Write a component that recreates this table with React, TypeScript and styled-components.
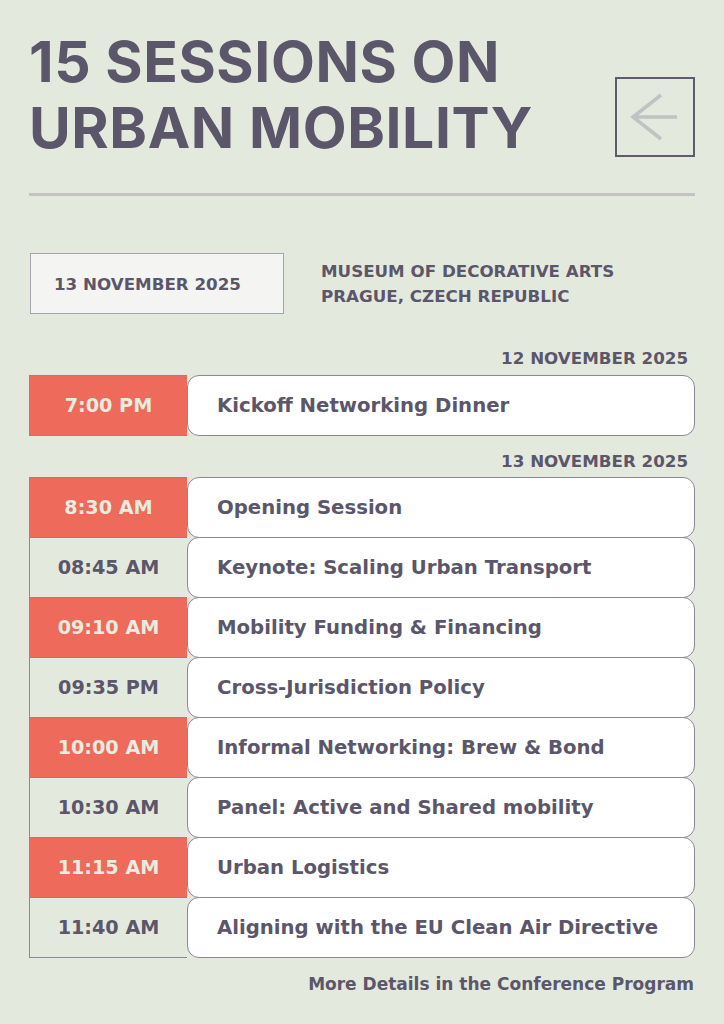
import React from "react";
import styled, { createGlobalStyle } from "styled-components";

const GlobalStyle = createGlobalStyle`
  html, body {
    margin: 0;
    padding: 0;
    background: #e4e9de;
  }
  body {
    font-family: "DejaVu Sans", Verdana, sans-serif;
    color: #5b566a;
  }
`;

const Page = styled.div`
  width: 724px;
  min-height: 1024px;
  box-sizing: border-box;
  padding: 29px 29px 0 29px;
  background: #e4e9de;
`;

const Header = styled.header`
  display: flex;
  justify-content: space-between;
  align-items: flex-start;
`;

const Title = styled.h1`
  margin: 0;
  font-family: Inter, Arial, sans-serif;
  font-weight: 700;
  font-size: 57px;
  line-height: 66px;
  letter-spacing: 0.6px;
  color: #5b566a;
  text-transform: uppercase;
`;

const ArrowBox = styled.div`
  width: 80px;
  height: 80px;
  box-sizing: border-box;
  border: 2px solid #5f5a6e;
  margin-top: 48px;
  display: flex;
  align-items: center;
  justify-content: center;
`;

const Divider = styled.hr`
  margin: 32px 0 0 0;
  border: none;
  height: 3px;
  background: #c3c4c1;
`;

const InfoRow = styled.section`
  display: flex;
  align-items: center;
  gap: 37px;
  margin-top: 57px;
  padding-left: 1px;
`;

const DateBox = styled.div`
  width: 254px;
  height: 61px;
  box-sizing: border-box;
  border: 1px solid #a7a4ad;
  background: #f4f4f2;
  display: flex;
  align-items: center;
  padding-left: 23px;
  font-size: 16.7px;
  font-weight: 700;
`;

const Venue = styled.div`
  font-size: 16.7px;
  font-weight: 700;
  line-height: 25px;
  text-transform: uppercase;
`;

const Schedule = styled.section`
  display: flex;
  flex-direction: column;
`;

const DayLabel = styled.div<{ $first?: boolean }>`
  text-align: right;
  padding-right: 7px;
  font-size: 16.7px;
  font-weight: 700;
  line-height: 20px;
  margin-top: ${(p) => (p.$first ? "34px" : "15px")};
  margin-bottom: ${(p) => (p.$first ? "7px" : "6px")};
`;

const Row = styled.div`
  display: grid;
  grid-template-columns: 158px 1fr;
  height: 61px;
  & + & {
    margin-top: -1px;
  }
`;

const TimeCell = styled.div<{ $accent: boolean }>`
  box-sizing: border-box;
  border: 1px solid #8c8794;
  border-right: none;
  background: ${(p) => (p.$accent ? "#ee6a5a" : "#e4e9de")};
  color: ${(p) => (p.$accent ? "#e9ecdf" : "#5b566a")};
  display: flex;
  align-items: center;
  justify-content: center;
  font-size: 19.2px;
  font-weight: 700;
`;

const SessionCell = styled.div`
  box-sizing: border-box;
  border: 1px solid #8c8794;
  border-radius: 12px;
  background: #ffffff;
  display: flex;
  align-items: center;
  padding-left: 29px;
  font-size: 19.7px;
  font-weight: 700;
  color: #5b566a;
`;

const Footer = styled.div`
  text-align: right;
  padding-right: 1px;
  margin-top: 16px;
  font-size: 17px;
  font-weight: 700;
  line-height: 20px;
`;

type Session = { time: string; title: string; accent: boolean };

const day1: Session[] = [
  { time: "7:00 PM", title: "Kickoff Networking Dinner", accent: true },
];

const day2: Session[] = [
  { time: "8:30 AM", title: "Opening Session", accent: true },
  { time: "08:45 AM", title: "Keynote: Scaling Urban Transport", accent: false },
  { time: "09:10 AM", title: "Mobility Funding & Financing", accent: true },
  { time: "09:35 PM", title: "Cross-Jurisdiction Policy", accent: false },
  { time: "10:00 AM", title: "Informal Networking: Brew & Bond", accent: true },
  { time: "10:30 AM", title: "Panel: Active and Shared mobility", accent: false },
  { time: "11:15 AM", title: "Urban Logistics", accent: true },
  { time: "11:40 AM", title: "Aligning with the EU Clean Air Directive", accent: false },
];

const ArrowIcon = () => (
  <svg width="76" height="76" viewBox="0 0 76 76" fill="none">
    <path
      d="M44 16 L16 38 L44 60 M16 38 H60"
      stroke="#c2c2c2"
      strokeWidth="3.5"
      fill="none"
    />
  </svg>
);

const Rows = ({ items }: { items: Session[] }) => (
  <div>
    {items.map((s) => (
      <Row key={s.time + s.title}>
        <TimeCell $accent={s.accent}>{s.time}</TimeCell>
        <SessionCell>{s.title}</SessionCell>
      </Row>
    ))}
  </div>
);

export default function App() {
  return (
    <>
      <GlobalStyle />
      <Page>
        <Header>
          <Title>
            15 Sessions on
            <br />
            Urban Mobility
          </Title>
          <ArrowBox>
            <ArrowIcon />
          </ArrowBox>
        </Header>
        <Divider />
        <InfoRow>
          <DateBox>13 NOVEMBER 2025</DateBox>
          <Venue>
            Museum of Decorative Arts
            <br />
            Prague, Czech Republic
          </Venue>
        </InfoRow>
        <Schedule>
          <DayLabel $first>12 NOVEMBER 2025</DayLabel>
          <Rows items={day1} />
          <DayLabel>13 NOVEMBER 2025</DayLabel>
          <Rows items={day2} />
        </Schedule>
        <Footer>More Details in the Conference Program</Footer>
      </Page>
    </>
  );
}
